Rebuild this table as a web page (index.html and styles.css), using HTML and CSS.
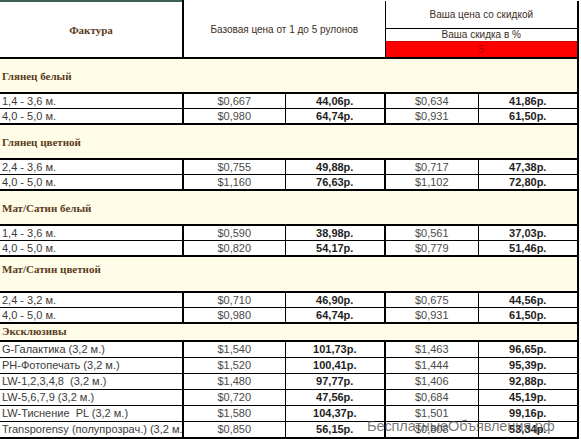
FILE: index.html
```html
<!DOCTYPE html>
<html lang="ru">
<head>
<meta charset="utf-8">
<title>Прайс</title>
<link rel="stylesheet" href="styles.css">
</head>
<body>
<div class="sheet">
<table class="price">
<colgroup><col class="c1"><col class="c2"><col class="c3"><col class="c4"><col class="c5"></colgroup>
<thead>
<tr class="h1"><th rowspan="3" class="fact">Фактура</th><th rowspan="3" colspan="2" class="base">Базовая цена от 1 до 5 рулонов</th><th colspan="2" class="disc">Ваша цена со скидкой</th></tr>
<tr class="h2"><th colspan="2" class="pct">Ваша скидка в %</th></tr>
<tr class="h3"><th colspan="2" class="red">5</th></tr>
</thead>
<tbody>
<tr class="sec s1"><td colspan="5">Глянец белый</td></tr>
<tr class="row first"><td class="name">1,4 - 3,6 м.</td><td class="usd">$0,667</td><td class="rub">44,06р.</td><td class="usd">$0,634</td><td class="rub end">41,86р.</td></tr>
<tr class="row last"><td class="name">4,0 - 5,0 м.</td><td class="usd">$0,980</td><td class="rub">64,74р.</td><td class="usd">$0,931</td><td class="rub end">61,50р.</td></tr>
<tr class="sec"><td colspan="5">Глянец цветной</td></tr>
<tr class="row first"><td class="name">2,4 - 3,6 м.</td><td class="usd">$0,755</td><td class="rub">49,88р.</td><td class="usd">$0,717</td><td class="rub end">47,38р.</td></tr>
<tr class="row last"><td class="name">4,0 - 5,0 м.</td><td class="usd">$1,160</td><td class="rub">76,63р.</td><td class="usd">$1,102</td><td class="rub end">72,80р.</td></tr>
<tr class="sec"><td colspan="5">Мат/Сатин белый</td></tr>
<tr class="row first"><td class="name">1,4 - 3,6 м.</td><td class="usd">$0,590</td><td class="rub">38,98р.</td><td class="usd">$0,561</td><td class="rub end">37,03р.</td></tr>
<tr class="row last"><td class="name">4,0 - 5,0 м.</td><td class="usd">$0,820</td><td class="rub">54,17р.</td><td class="usd">$0,779</td><td class="rub end">51,46р.</td></tr>
<tr class="sec s4"><td colspan="5">Мат/Сатин цветной</td></tr>
<tr class="row first"><td class="name">2,4 - 3,2 м.</td><td class="usd">$0,710</td><td class="rub">46,90р.</td><td class="usd">$0,675</td><td class="rub end">44,56р.</td></tr>
<tr class="row last"><td class="name">4,0 - 5,0 м.</td><td class="usd">$0,980</td><td class="rub">64,74р.</td><td class="usd">$0,931</td><td class="rub end">61,50р.</td></tr>
<tr class="sec s5"><td colspan="5">Эксклюзивы</td></tr>
<tr class="row first tall"><td class="name">G-Галактика (3,2 м.)</td><td class="usd">$1,540</td><td class="rub">101,73р.</td><td class="usd">$1,463</td><td class="rub end">96,65р.</td></tr>
<tr class="row tall"><td class="name">PH-Фотопечать (3,2 м.)</td><td class="usd">$1,520</td><td class="rub">100,41р.</td><td class="usd">$1,444</td><td class="rub end">95,39р.</td></tr>
<tr class="row tall"><td class="name">LW-1,2,3,4,8&nbsp; (3,2 м.)</td><td class="usd">$1,480</td><td class="rub">97,77р.</td><td class="usd">$1,406</td><td class="rub end">92,88р.</td></tr>
<tr class="row tall"><td class="name">LW-5,6,7,9 (3,2 м.)</td><td class="usd">$0,720</td><td class="rub">47,56р.</td><td class="usd">$0,684</td><td class="rub end">45,19р.</td></tr>
<tr class="row tall"><td class="name">LW-Тиснение&nbsp; PL (3,2 м.)</td><td class="usd">$1,580</td><td class="rub">104,37р.</td><td class="usd">$1,501</td><td class="rub end">99,16р.</td></tr>
<tr class="row tall"><td class="name">Transporensy (полупрозрач.) (3,2 м.)</td><td class="usd">$0,850</td><td class="rub">56,15р.</td><td class="usd">$0,808</td><td class="rub end">53,34р.</td></tr>
</tbody>
</table>
<div class="watermark">БесплатныеОбъявления.рф</div>
</div>
</body>
</html>
```

FILE: styles.css
```css
html, body {
  margin: 0;
  background: #fff;
}
.sheet {
  position: relative;
  width: 581px;
  height: 439px;
  overflow: hidden;
  font-family: "Liberation Sans", Arial, sans-serif;
}
.price {
  border-collapse: collapse;
  table-layout: fixed;
  width: 578px;
}
.c1 { width: 183px; }
.c2 { width: 102px; }
.c3 { width: 100px; }
.c4 { width: 93px; }
.c5 { width: 100px; }

.price th, .price td {
  padding: 0 2px;
  white-space: nowrap;
  overflow: hidden;
}
.price th {
  font-weight: normal;
  color: #3c2d1e;
  font-size: 10px;
  text-align: center;
  vertical-align: middle;
  border-top: 0;
}
.h1 { height: 27px; }
.h2 { height: 13px; }
.h3 { height: 17px; }
.price th.fact {
  font-family: "Liberation Serif", "DejaVu Serif", serif;
  font-weight: bold;
  font-size: 11px;
  color: #5a3b1c;
  border-top: 2px solid #3e5f57;
  border-right: 2px solid #000;
  border-bottom: 2px solid #000;
}
.base {
  border-right: 1px solid #000;
  border-bottom: 2px solid #000;
}
.disc {
  border-right: 2px solid #000;
  border-bottom: 1px solid #000;
  padding-bottom: 2px;
}
.pct {
  border-right: 2px solid #000;
  line-height: 12px;
}
.price th.red {
  background: #ff0000;
  color: #b00000;
  border-right: 2px solid #000;
  border-bottom: 2px solid #000;
  border-top: 1px solid #d40000;
}

.sec td {
  height: 33px;
  background: #fffde8;
  border-right: 2px solid #000;
  font-family: "Liberation Serif", "DejaVu Serif", serif;
  font-weight: bold;
  font-size: 11px;
  color: #5a3b1c;
  vertical-align: middle;
}
.sec.s4 td {
  vertical-align: top;
  padding-top: 6px;
  height: 28px;
}
.sec.s5 td {
  height: 15px;
  line-height: 12px;
  vertical-align: top;
  padding-top: 1px;
  padding-bottom: 0;
}

.row td {
  height: 14px;
  font-size: 11px;
  line-height: 13px;
  border: 1px solid #000;
  padding-top: 0;
  padding-bottom: 0;
}
.row.tall td { height: 15px; }
.row.first td { border-top: 2px solid #000; }
.row.last td { border-bottom: 2px solid #000; }
.row:last-child td { border-bottom: 2px solid #000; }
.row td.name {
  text-align: left;
  color: #3a3a3a;
  border-left: 0;
  border-right: 2px solid #000;
  text-overflow: clip;
}
.row td.usd {
  text-align: center;
  color: #4a4a4a;
}
.row td.rub {
  text-align: center;
  font-weight: bold;
  color: #1e1e1e;
  border-right: 2px solid #000;
}
.row td.end { border-right: 2px solid #000; }

.watermark {
  position: absolute;
  left: 367px;
  top: 418px;
  font-family: "Liberation Sans", Arial, sans-serif;
  font-size: 14.6px;
  color: rgba(70, 70, 70, 0.72);
  white-space: nowrap;
  letter-spacing: -0.15px;
}
```
